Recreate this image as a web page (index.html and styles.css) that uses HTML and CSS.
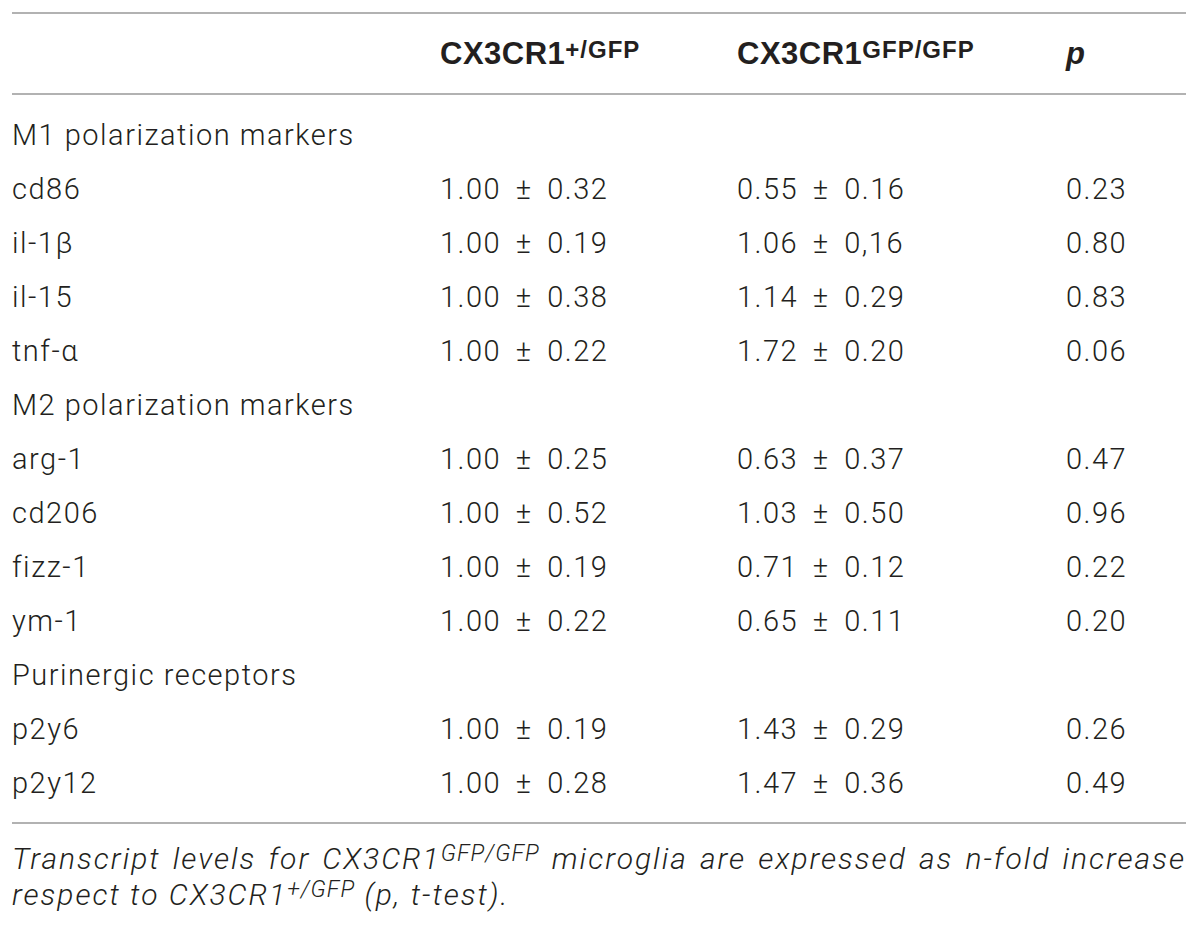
FILE: index.html
```html
<!DOCTYPE html>
<html lang="en">
<head>
    <meta charset="UTF-8">
    <title>CX3CR1 microglia transcript levels</title>
    <link rel="stylesheet" href="styles.css">
</head>
<body>

    <!-- Table: transcript levels -->
    <div class="table-wrap">
        <table class="data-table">
            <thead>
                <tr>
                    <th class="col-name"></th>
                    <th class="col-a">CX3CR1<sup>+/GFP</sup></th>
                    <th class="col-b">CX3CR1<sup>GFP/GFP</sup></th>
                    <th class="col-p"><i>p</i></th>
                </tr>
            </thead>
            <tbody>
                <tr class="group first"><td colspan="4">M1 polarization markers</td></tr>
                <tr><td>cd86</td><td class="num">1.00 &plusmn; 0.32</td><td class="num">0.55 &plusmn; 0.16</td><td>0.23</td></tr>
                <tr><td>il-1&beta;</td><td class="num">1.00 &plusmn; 0.19</td><td class="num">1.06 &plusmn; 0,16</td><td>0.80</td></tr>
                <tr><td>il-15</td><td class="num">1.00 &plusmn; 0.38</td><td class="num">1.14 &plusmn; 0.29</td><td>0.83</td></tr>
                <tr><td>tnf-&alpha;</td><td class="num">1.00 &plusmn; 0.22</td><td class="num">1.72 &plusmn; 0.20</td><td>0.06</td></tr>
                <tr class="group"><td colspan="4">M2 polarization markers</td></tr>
                <tr><td>arg-1</td><td class="num">1.00 &plusmn; 0.25</td><td class="num">0.63 &plusmn; 0.37</td><td>0.47</td></tr>
                <tr><td>cd206</td><td class="num">1.00 &plusmn; 0.52</td><td class="num">1.03 &plusmn; 0.50</td><td>0.96</td></tr>
                <tr><td>fizz-1</td><td class="num">1.00 &plusmn; 0.19</td><td class="num">0.71 &plusmn; 0.12</td><td>0.22</td></tr>
                <tr><td>ym-1</td><td class="num">1.00 &plusmn; 0.22</td><td class="num">0.65 &plusmn; 0.11</td><td>0.20</td></tr>
                <tr class="group"><td colspan="4">Purinergic receptors</td></tr>
                <tr><td>p2y6</td><td class="num">1.00 &plusmn; 0.19</td><td class="num">1.43 &plusmn; 0.29</td><td>0.26</td></tr>
                <tr class="last"><td>p2y12</td><td class="num">1.00 &plusmn; 0.28</td><td class="num">1.47 &plusmn; 0.36</td><td>0.49</td></tr>
            </tbody>
        </table>

        <p class="note">
            <span class="note-line">Transcript levels for CX3CR1<sup>GFP/GFP</sup> microglia are expressed as n-fold increase</span>
            respect to CX3CR1<sup>+/GFP</sup> (p, t-test).
        </p>
    </div>

</body>
</html>
```

FILE: styles.css
```css
/* General Styles */
body, html {
    margin: 0;
    padding: 0;
    background: #ffffff;
    color: #231f20;
    font-family: Roboto, 'Liberation Sans', sans-serif;
    font-weight: 300;
}

.table-wrap {
    width: 1174px;
    margin: 12px 0 0 12px;
}

.data-table {
    width: 100%;
    border-collapse: collapse;
    border-top: 2px solid #b2b2b2;
    border-bottom: 2px solid #b2b2b2;
    font-size: 29px;
    letter-spacing: 1.5px;
}

.data-table th,
.data-table td {
    padding: 0;
    text-align: left;
}

/* Header row */
.data-table thead th {
    height: 79px;
    line-height: 79px;
    vertical-align: middle;
    font-family: 'Liberation Sans', Arial, sans-serif;
    font-size: 31px;
    font-weight: 700;
    letter-spacing: 0.5px;
    border-bottom: 2px solid #b2b2b2;
}

.data-table sup {
    font-size: 24px;
    letter-spacing: 1px;
    vertical-align: 6px;
    line-height: 0;
}

/* Body rows */
.data-table tbody td {
    height: 54px;
    line-height: 54px;
    vertical-align: middle;
}

.data-table tbody td.num {
    word-spacing: 6px;
}

.data-table tbody tr.first td {
    height: 67px;
    vertical-align: bottom;
}

.data-table tbody tr.last td {
    height: 66px;
    vertical-align: top;
}

.col-name { width: 428px; }
.col-a { width: 297px; }
.col-b { width: 329px; }
.col-p { width: auto; }

/* Footnote */
.note {
    margin: 17px 0 0;
    font-size: 30px;
    line-height: 36px;
    font-style: italic;
    letter-spacing: 2px;
}

.note-line {
    display: block;
    text-align: justify;
    text-align-last: justify;
}

.note sup {
    font-size: 23px;
    letter-spacing: 1px;
    vertical-align: 8px;
    line-height: 0;
}
```
